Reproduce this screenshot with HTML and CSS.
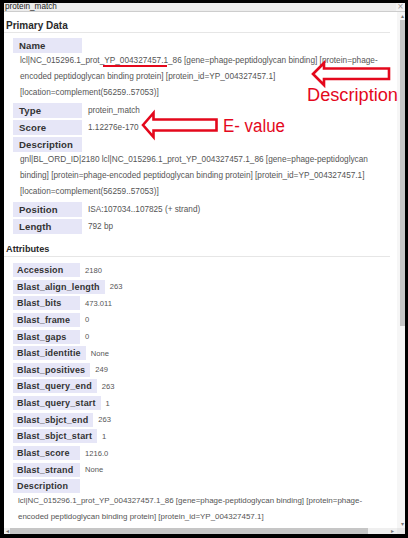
FILE: index.html
```html
<!DOCTYPE html>
<html>
<head>
<meta charset="utf-8">
<link rel="stylesheet" href="styles.css">
</head>
<body>
<div class="win">
  <div class="titlebar">
    <span class="title">protein_match</span>
    <span class="close">×</span>
  </div>
  <div class="main">
    <div class="left">
      <div class="content">
        <div class="heading primary">Primary Data</div>
        <div class="fields">
          <div class="field block">
            <div class="label">Name</div>
            <div class="bval">lcl|NC_015296.1_prot_YP_004327457.1_86 [gene=phage-peptidoglycan binding] [protein=phage-<br>encoded peptidoglycan binding protein] [protein_id=YP_004327457.1]<br>[location=complement(56259..57053)]</div>
          </div>
          <div class="field row"><div class="label">Type</div><div class="val">protein_match</div></div>
          <div class="field row"><div class="label">Score</div><div class="val">1.12276e-170</div></div>
          <div class="field block">
            <div class="label">Description</div>
            <div class="bval">gnl|BL_ORD_ID|2180 lcl|NC_015296.1_prot_YP_004327457.1_86 [gene=phage-peptidoglycan<br>binding] [protein=phage-encoded peptidoglycan binding protein] [protein_id=YP_004327457.1]<br>[location=complement(56259..57053)]</div>
          </div>
          <div class="field row"><div class="label">Position</div><div class="val">ISA:107034..107825 (+ strand)</div></div>
          <div class="field row"><div class="label">Length</div><div class="val">792 bp</div></div>
        </div>
        <div class="heading attrs">Attributes</div>
        <div class="afields">
          <div class="arow"><div class="alabel">Accession</div><div class="aval">2180</div></div>
          <div class="arow"><div class="alabel">Blast_align_length</div><div class="aval">263</div></div>
          <div class="arow"><div class="alabel">Blast_bits</div><div class="aval">473.011</div></div>
          <div class="arow"><div class="alabel">Blast_frame</div><div class="aval">0</div></div>
          <div class="arow"><div class="alabel">Blast_gaps</div><div class="aval">0</div></div>
          <div class="arow"><div class="alabel">Blast_identitie</div><div class="aval">None</div></div>
          <div class="arow"><div class="alabel">Blast_positives</div><div class="aval">249</div></div>
          <div class="arow"><div class="alabel">Blast_query_end</div><div class="aval">263</div></div>
          <div class="arow"><div class="alabel">Blast_query_start</div><div class="aval">1</div></div>
          <div class="arow"><div class="alabel">Blast_sbjct_end</div><div class="aval">263</div></div>
          <div class="arow"><div class="alabel">Blast_sbjct_start</div><div class="aval">1</div></div>
          <div class="arow"><div class="alabel">Blast_score</div><div class="aval">1216.0</div></div>
          <div class="arow"><div class="alabel">Blast_strand</div><div class="aval">None</div></div>
          <div class="ablock">
            <div class="alabel">Description</div>
            <div class="abval">lcl|NC_015296.1_prot_YP_004327457.1_86 [gene=phage-peptidoglycan binding] [protein=phage-<br>encoded peptidoglycan binding protein] [protein_id=YP_004327457.1]<br>[location=complement(56259..57053)]</div>
          </div>
        </div>
      </div>
      <div class="hscroll">
        <span class="harrow">◂</span>
        <div class="hthumb"></div>
        <span class="harrow right">▸</span>
      </div>
    </div>
    <div class="vscroll">
      <span class="varrow">▴</span>
      <div class="vthumb"></div>
      <div class="vspace"></div>
      <span class="varrow">▾</span>
      <div class="corner"></div>
    </div>
  </div>
</div>
<svg class="annot" width="408" height="538" viewBox="0 0 408 538">
  <rect x="103" y="65" width="64" height="2" fill="#e4081c"/>
  <path d="M313 74 L324 63 L324 68.5 L389 68.5 L389 79 L324 79 L324 85 Z" fill="none" stroke="#e4081c" stroke-width="2.6" stroke-linejoin="miter"/>
  <text x="307" y="101" font-family="Liberation Sans, Arial, sans-serif" font-size="18" fill="#e4081c" textLength="91" lengthAdjust="spacingAndGlyphs">Description</text>
  <path d="M143 125 L153.5 113 L153.5 119.5 L216.5 119.5 L216.5 130.5 L153.5 130.5 L153.5 137 Z" fill="none" stroke="#e4081c" stroke-width="2.6" stroke-linejoin="miter"/>
  <text x="223" y="132" font-family="Liberation Sans, Arial, sans-serif" font-size="18" fill="#e4081c" textLength="62" lengthAdjust="spacingAndGlyphs">E- value</text>
</svg>
</body>
</html>
```
FILE: styles.css
```css
html, body {
  margin: 0;
  padding: 0;
}
body {
  background: #000;
  width: 408px;
  height: 538px;
  overflow: hidden;
  position: relative;
  font-family: "Liberation Sans", Arial, sans-serif;
}
.win {
  margin: 3px 0 0 4px;
  width: 401px;
  height: 531px;
  background: #fff;
  display: flex;
  flex-direction: column;
}
.titlebar {
  height: 8px;
  border-bottom: 1px solid #cdcdcd;
  background: #ececec;
  display: flex;
  align-items: center;
  justify-content: space-between;
}
.title {
  font-size: 8.2px;
  line-height: 8px;
  color: #222;
  padding-left: 1px;
}
.close {
  font-size: 10px;
  line-height: 8px;
  color: #a0a0a0;
  width: 9px;
  text-align: center;
  background: #f4f4f4;
  height: 8px;
}
.main {
  flex: 1;
  display: flex;
  min-height: 0;
}
.left {
  flex: 1;
  display: flex;
  flex-direction: column;
  min-width: 0;
}
.content {
  flex: 1;
  overflow: hidden;
  min-height: 0;
}
.heading {
  font-weight: bold;
  color: #2a2a2a;
  height: 13px;
  line-height: 13px;
  padding-left: 2px;
  margin-right: 7px;
  border-bottom: 1px solid #e6e6e6;
}
.heading.primary {
  font-size: 10px;
  margin-top: 7px;
}
.heading.attrs {
  font-size: 9.2px;
  margin-top: 9px;
}
.fields {
  padding: 5px 7px 0 9px;
}
.field {
  margin-bottom: 2px;
}
.field.row {
  display: flex;
  align-items: center;
}
.label {
  display: block;
  width: max-content;
  box-sizing: border-box;
  min-width: 69px;
  height: 15px;
  line-height: 15px;
  padding-left: 6px;
  background: #e6e6f7;
  color: #333;
  font-weight: bold;
  font-size: 9.6px;
  letter-spacing: 0.1px;
}
.val {
  margin-left: 6px;
  font-size: 8.2px;
  color: #555;
}
.bval {
  font-size: 8.25px;
  line-height: 16px;
  color: #555;
  padding-left: 7px;
  white-space: nowrap;
}
.afields {
  padding: 6px 7px 0 9px;
}
.arow {
  display: flex;
  align-items: center;
  margin-bottom: 2.65px;
}
.alabel {
  display: block;
  width: max-content;
  box-sizing: border-box;
  min-width: 67px;
  height: 14px;
  line-height: 14px;
  padding: 0 5px 0 4px;
  background: #e6e6f7;
  color: #333;
  font-weight: bold;
  font-size: 9px;
  letter-spacing: 0.15px;
}
.aval {
  margin-left: 5px;
  font-size: 7.6px;
  color: #555;
}
.abval {
  font-size: 7.95px;
  line-height: 16px;
  color: #555;
  padding-left: 5px;
  white-space: nowrap;
}
.hscroll {
  height: 6px;
  background: #efefef;
  display: flex;
  align-items: center;
}
.harrow {
  width: 6px;
  font-size: 6px;
  line-height: 6px;
  color: #777;
  text-align: center;
}
.harrow.right {
  margin-left: auto;
  width: 9px;
}
.hthumb {
  width: 358px;
  height: 6px;
  background: #c6c6c6;
}
.vscroll {
  width: 8px;
  background: #f6f6f6;
  display: flex;
  flex-direction: column;
  align-items: center;
}
.varrow {
  font-size: 6px;
  line-height: 8px;
  height: 8px;
  color: #777;
  padding-left: 3px;
}
.vthumb {
  width: 5px;
  margin-left: 2px;
  height: 306px;
  background: #c6c6c6;
}
.vspace {
  flex: 1;
}
.corner {
  height: 6px;
  width: 8px;
  background: #e8e8e8;
}
.annot {
  position: absolute;
  left: 0;
  top: 0;
  pointer-events: none;
}
```
